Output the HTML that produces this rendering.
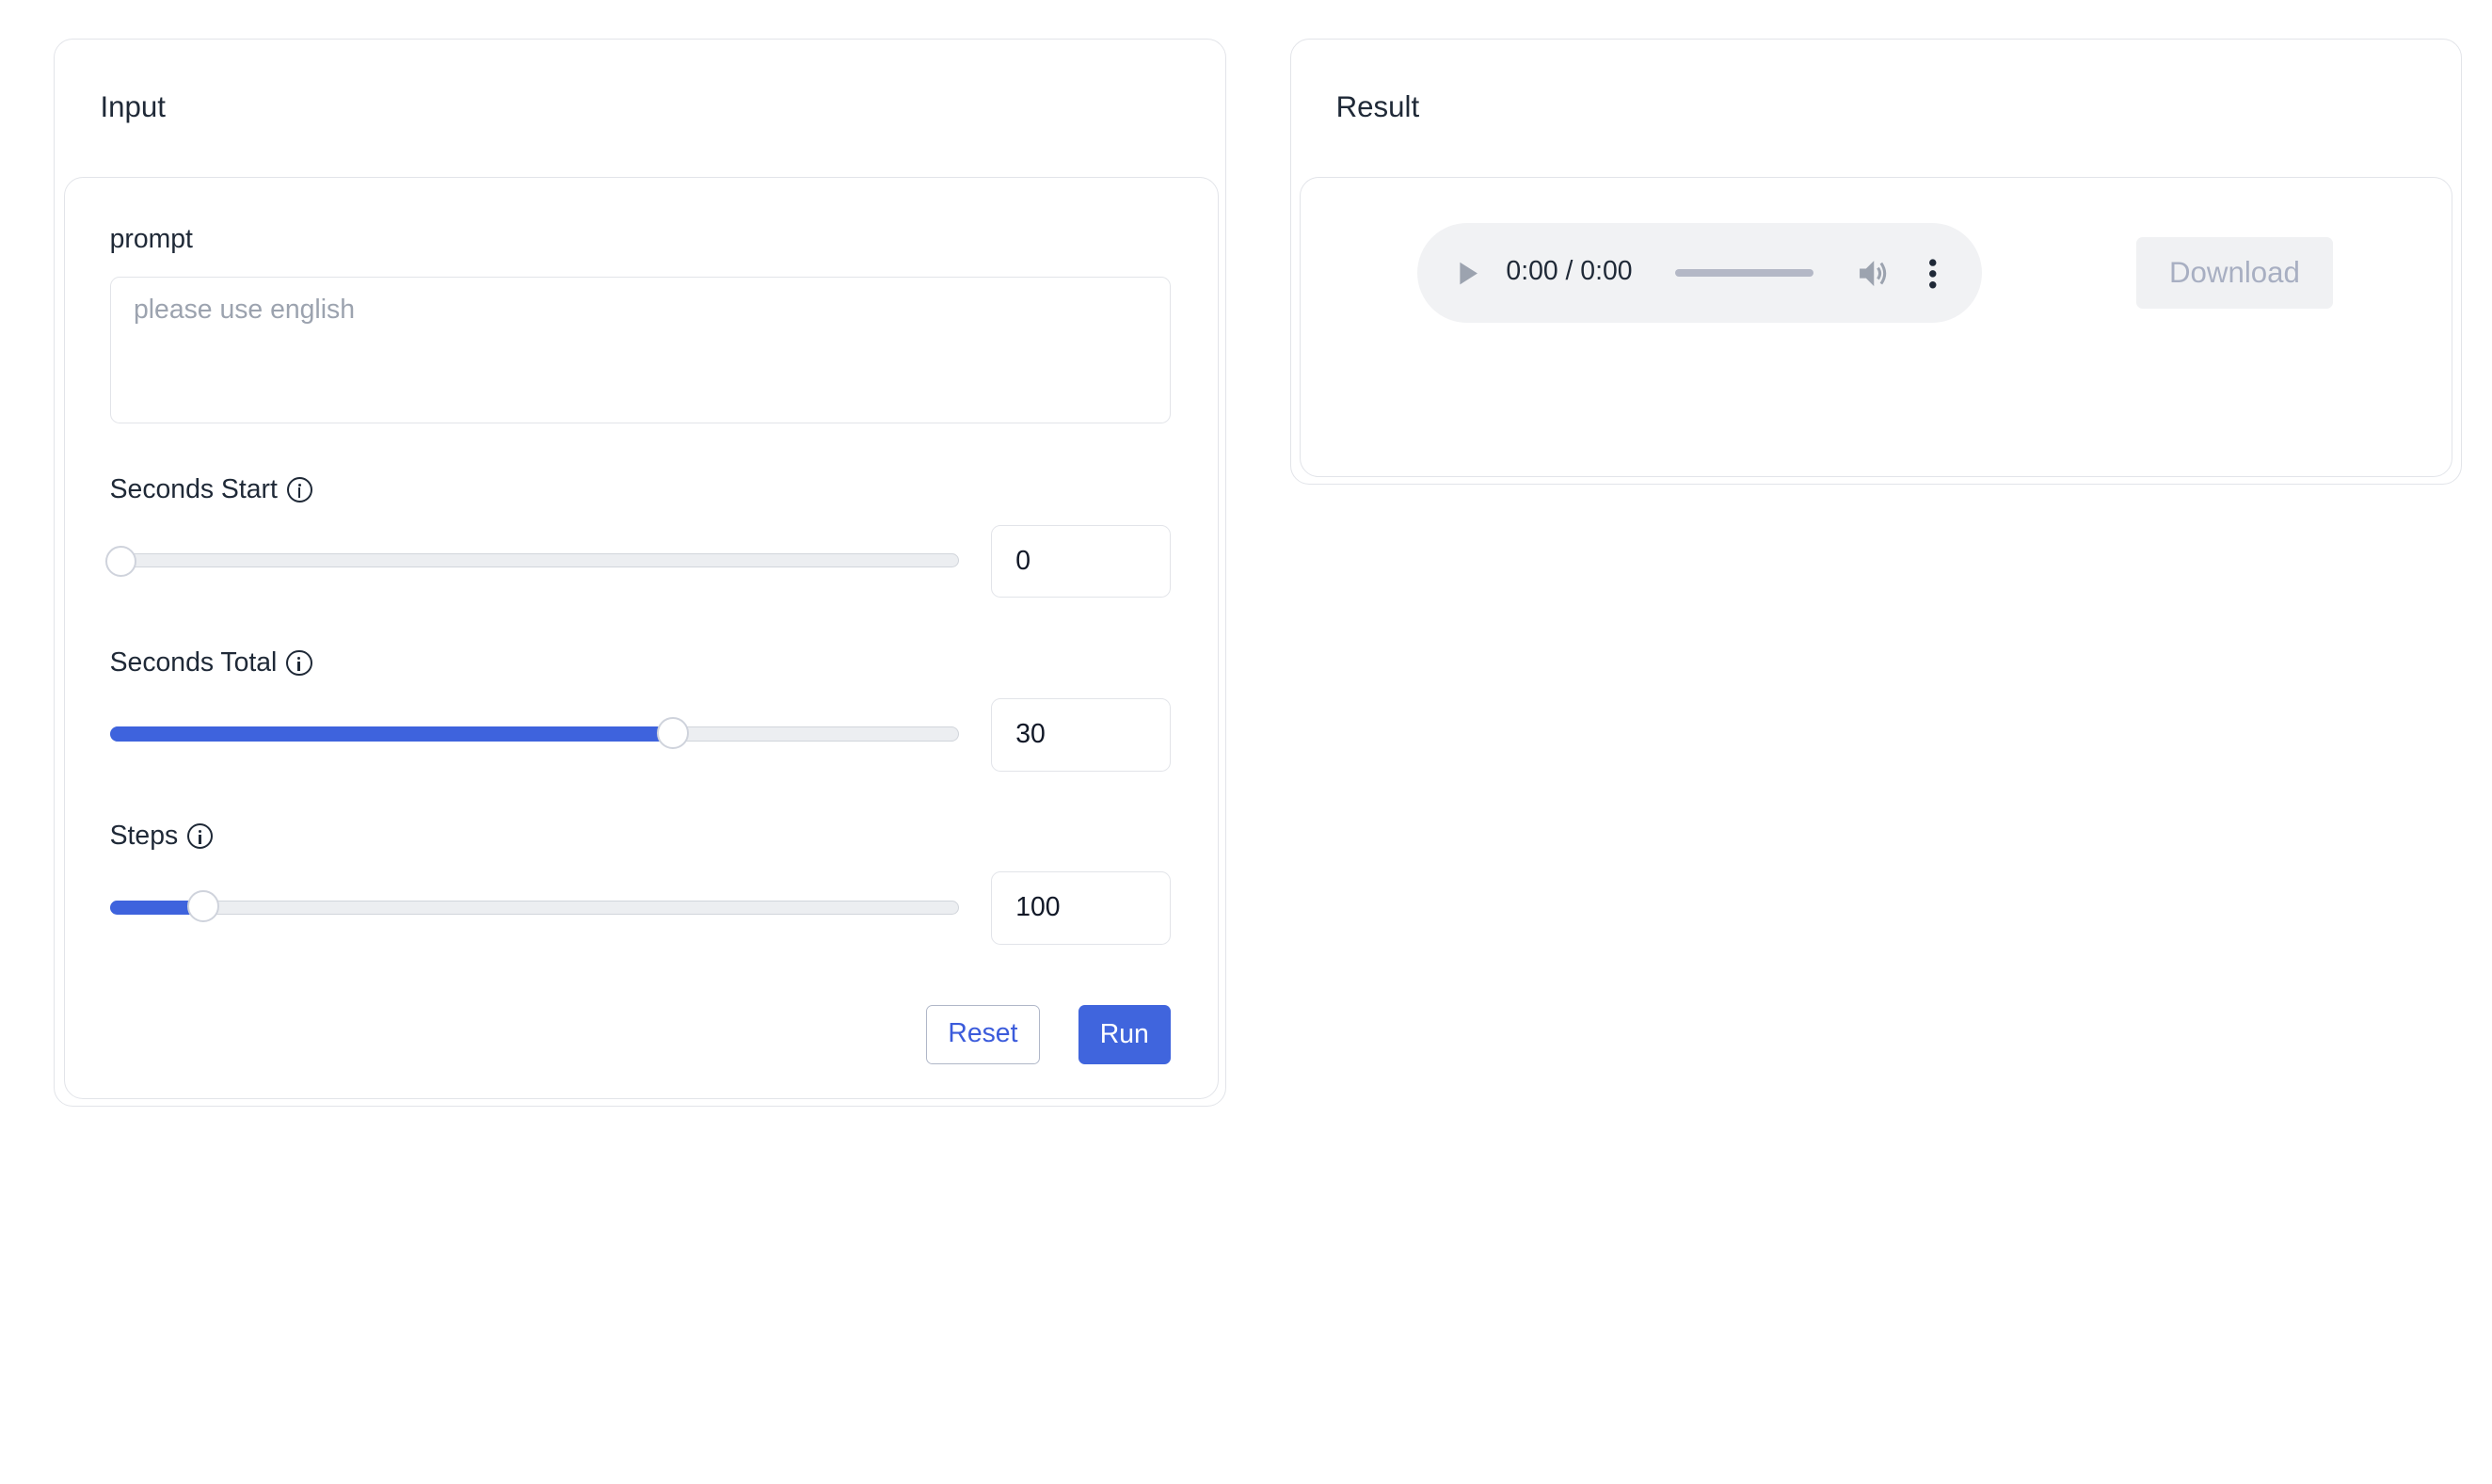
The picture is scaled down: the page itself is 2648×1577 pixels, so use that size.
<!DOCTYPE html>
<html><head><meta charset="utf-8">
<style>
html,body{margin:0;padding:0;background:#fff;}
body{width:1567px;height:933px;zoom:1.690;position:relative;overflow:hidden;font-family:"Liberation Sans",sans-serif;color:#1f2937;}
.abs{position:absolute;}
.card{position:absolute;border:1px solid #e2e4e9;border-radius:12px;background:#fff;box-sizing:border-box;}
.title{position:absolute;font-size:18.5px;color:#1f2937;}
.lbl{position:absolute;font-size:16.8px;color:#1f2937;line-height:20px;display:flex;align-items:center;}
.info{display:inline-block;width:16px;height:16px;border:1.4px solid #1f2937;border-radius:50%;margin-left:6px;position:relative;box-sizing:border-box;}
.info:before{content:"";position:absolute;left:5.8px;top:2.8px;width:1.8px;height:1.8px;background:#1f2937;border-radius:50%;}
.info:after{content:"";position:absolute;left:5.9px;top:5.6px;width:1.5px;height:6px;background:#1f2937;}
.track{position:absolute;left:69px;width:534px;height:9px;border-radius:5px;background:#eceef1;border:1px solid #d1d5db;box-sizing:border-box;}
.fill{position:absolute;left:69px;height:9px;border-radius:5px 0 0 5px;background:#3e63dd;}
.thumb{position:absolute;width:20px;height:20px;border-radius:50%;background:#fff;border:1.3px solid #cfd3dc;box-sizing:border-box;}
.num{position:absolute;left:623px;width:113px;height:46px;border:1px solid #e2e4e9;border-radius:6px;box-sizing:border-box;font-size:16.8px;padding-left:15px;line-height:44px;color:#111827;}
</style></head><body>

<div class="card" style="left:34px;top:24px;width:737px;height:672px;"></div>
<div class="title" style="left:63px;top:57px;">Input</div>
<div class="card" style="left:40px;top:111px;width:726px;height:580px;"></div>

<div class="lbl" style="left:69px;top:141px;">prompt</div>
<div class="abs" style="left:69px;top:174px;width:667px;height:92px;border:1px solid #e2e4e9;border-radius:6px;box-sizing:border-box;"></div>
<div class="abs" style="left:84px;top:185px;font-size:16.8px;color:#9ca3af;">please use english</div>

<div class="lbl" style="left:69px;top:298px;">Seconds Start<span class="info"></span></div>
<div class="track" style="top:348px;"></div>
<div class="thumb" style="left:66px;top:343px;"></div>
<div class="num" style="top:330px;">0</div>

<div class="lbl" style="left:69px;top:407px;">Seconds Total<span class="info"></span></div>
<div class="track" style="top:457px;"></div>
<div class="fill" style="top:457px;width:354px;"></div>
<div class="thumb" style="left:413px;top:451px;"></div>
<div class="num" style="top:439px;">30</div>

<div class="lbl" style="left:69px;top:516px;">Steps<span class="info"></span></div>
<div class="track" style="top:566px;"></div>
<div class="fill" style="top:566px;width:59px;"></div>
<div class="thumb" style="left:118px;top:560px;"></div>
<div class="num" style="top:548px;">100</div>

<div class="abs" style="left:582px;top:632px;width:72px;height:37px;border:1px solid #b0b7c8;border-radius:4px;box-sizing:border-box;color:#3b5bdb;font-size:16.8px;text-align:center;line-height:35px;">Reset</div>
<div class="abs" style="left:678px;top:632px;width:58px;height:37px;background:#4065dd;border-radius:4px;color:#fff;font-size:16.8px;text-align:center;line-height:37px;">Run</div>

<div class="card" style="left:811px;top:24px;width:737px;height:281px;"></div>
<div class="title" style="left:840px;top:57px;">Result</div>
<div class="card" style="left:817px;top:111px;width:725px;height:189px;"></div>

<div class="abs" style="left:891px;top:140px;width:355px;height:63px;border-radius:32px;background:#f1f2f4;"></div>
<svg class="abs" style="left:916px;top:164px;" width="14" height="16" viewBox="0 0 14 16"><path d="M2 1 L13 8 L2 15 Z" fill="#9ca3af"/></svg>
<div class="abs" style="left:947px;top:161px;font-size:16.8px;color:#1f2937;">0:00 / 0:00</div>
<div class="abs" style="left:1053px;top:169px;width:87px;height:5px;border-radius:3px;background:#b4b8c6;"></div>
<svg class="abs" style="left:1166px;top:161px;" width="22" height="22" viewBox="0 0 22 22"><path d="M3 8 H7 L12 3 V19 L7 14 H3 Z" fill="#9ca3af"/><path d="M14.5 7.5 Q17 11 14.5 14.5" stroke="#9ca3af" stroke-width="1.8" fill="none"/><path d="M16.5 4.5 Q21 11 16.5 17.5" stroke="#9ca3af" stroke-width="1.8" fill="none"/></svg>
<svg class="abs" style="left:1211px;top:162px;" width="8" height="20" viewBox="0 0 8 20"><circle cx="4" cy="3" r="2.2" fill="#1f2937"/><circle cx="4" cy="10" r="2.2" fill="#1f2937"/><circle cx="4" cy="17" r="2.2" fill="#1f2937"/></svg>

<div class="abs" style="left:1343px;top:149px;width:124px;height:45px;border-radius:4px;background:#f0f1f3;color:#a8afc2;font-size:18.5px;text-align:center;line-height:45px;">Download</div>

</body></html>
